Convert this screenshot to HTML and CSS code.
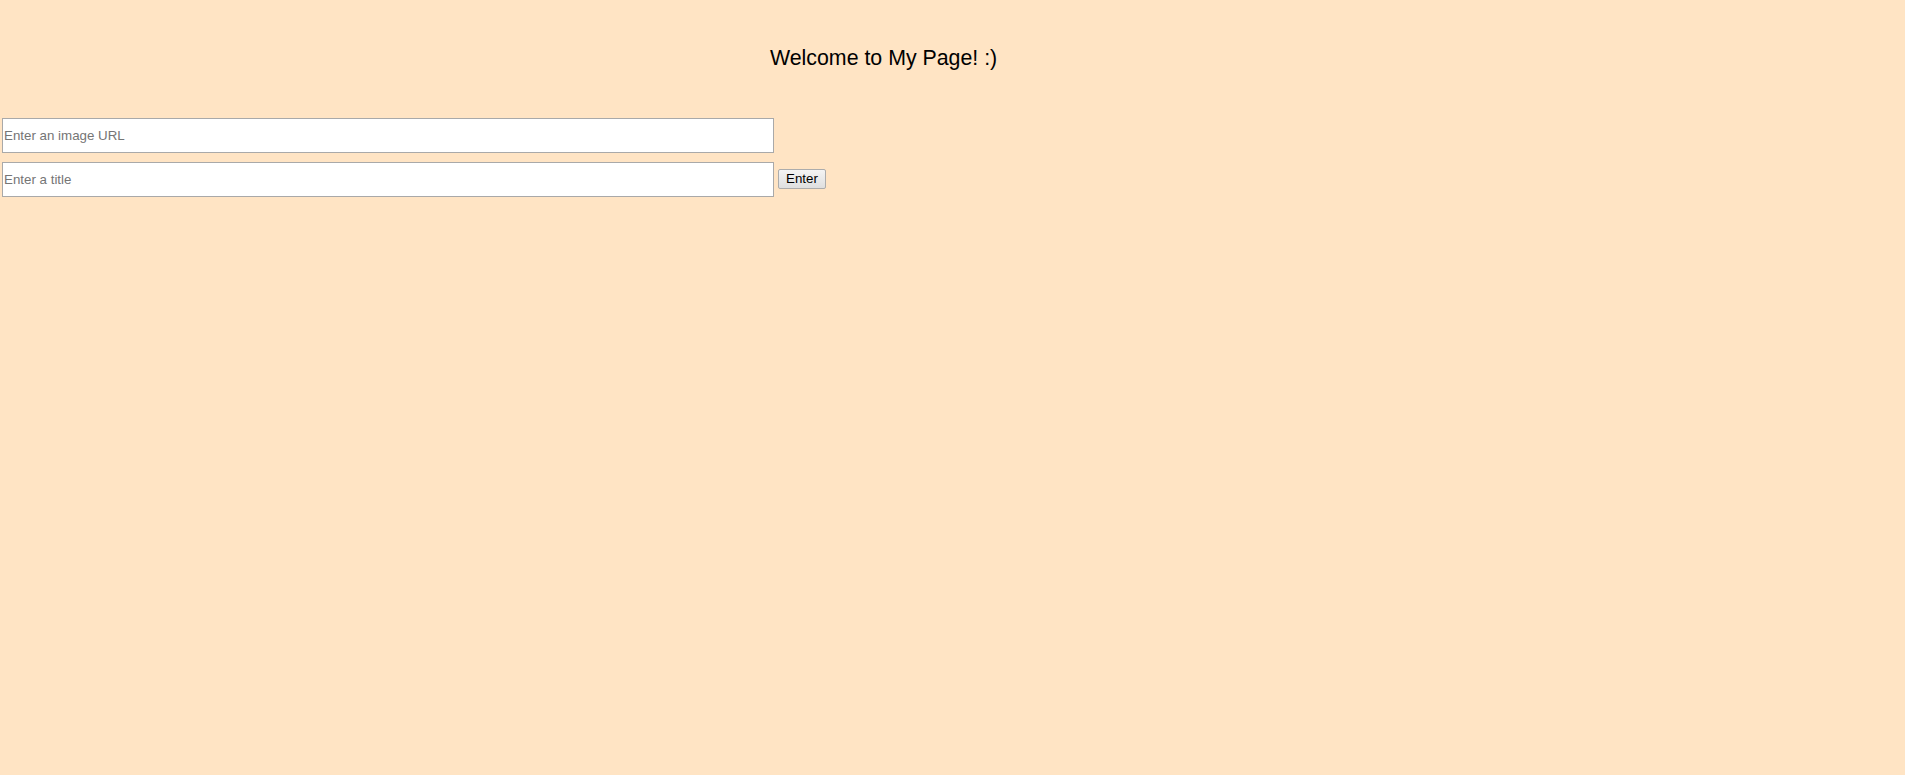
FILE: index.html
```html
<!DOCTYPE html>
<html lang="en">
<head>
<meta charset="utf-8">
<title>My Page</title>
<link rel="stylesheet" href="styles.css">
</head>
<body>
  <h1 class="title">Welcome to My Page! :)</h1>
  <form class="form">
    <div class="row">
      <input class="field" type="text" placeholder="Enter an image URL">
    </div>
    <div class="row">
      <input class="field" type="text" placeholder="Enter a title">
      <button class="btn" type="button">Enter</button>
    </div>
  </form>
</body>
</html>
```
FILE: styles.css
```css
html, body {
  margin: 0;
  padding: 0;
  background: #ffe4c4;
  font-family: "Liberation Sans", Arial, sans-serif;
  color: #000;
}

.title {
  margin: 0;
  padding: 46px 0 0 770px;
  font-size: 21.33px;
  font-weight: normal;
  line-height: normal;
}

.form {
  margin: 47px 0 0 2px;
  display: flex;
  flex-direction: column;
  gap: 9px;
}

.row {
  display: flex;
  align-items: flex-start;
  gap: 4px;
}

.field {
  box-sizing: border-box;
  width: 772px;
  height: 35px;
  margin: 0;
  padding: 0 1px;
  border: 1px solid #a9a9a9;
  background: #fff;
  font-family: "Liberation Sans", Arial, sans-serif;
  font-size: 13.33px;
  color: #000;
  outline: none;
}

.field::placeholder {
  color: #757575;
}

.btn {
  box-sizing: border-box;
  width: 48px;
  height: 20px;
  margin: 7px 0 0;
  padding: 0;
  border: 1px solid #acacac;
  border-radius: 2px;
  background: linear-gradient(#f4f4f4, #dfdfdf);
  font-family: "Liberation Sans", Arial, sans-serif;
  font-size: 13.33px;
  color: #000;
  line-height: 18px;
}
```
